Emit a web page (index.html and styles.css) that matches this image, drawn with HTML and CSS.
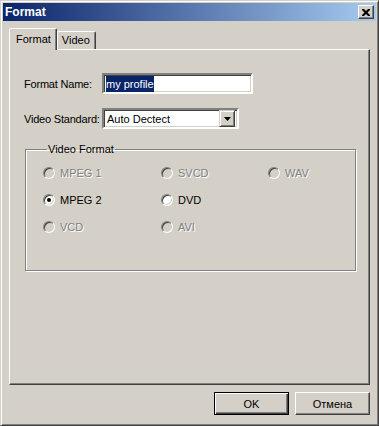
FILE: index.html
```html
<!DOCTYPE html>
<html lang="en">

<head>
    <meta charset="UTF-8">
    <title>Format</title>
    <link rel="stylesheet" href="styles.css">
</head>

<body>
    <div class="window">
        <div class="titlebar">
            <span class="title">Format</span>
            <button class="close-btn">
                <svg width="8" height="7" viewBox="0 0 8 7">
                    <path d="M0 0h2l2 2 2-2h2v1l-2.5 2.5L8 6v1H6L4 5 2 7H0V6l2.5-2.5L0 1z" fill="#000"/>
                </svg>
            </button>
        </div>

        <div class="content">
            <div class="tabs">
                <div class="tab active">Format</div>
                <div class="tab">Video</div>
            </div>

            <div class="panel">
                <div class="field-row">
                    <label class="field-label">Format Name:</label>
                    <div class="textbox name-box"><span class="selected-text">my profile</span></div>
                </div>

                <div class="field-row standard-row">
                    <label class="field-label">Video Standard:</label>
                    <div class="textbox select-box">
                        <span class="select-value">Auto Dectect</span>
                        <span class="drop-btn">
                            <svg width="7" height="4" viewBox="0 0 7 4"><path d="M0 0h7L3.5 4z" fill="#000"/></svg>
                        </span>
                    </div>
                </div>

                <fieldset class="group">
                    <legend>Video Format</legend>
                    <div class="radio-grid">
                        <div class="radio disabled"><span class="dot"></span>MPEG 1</div>
                        <div class="radio disabled"><span class="dot"></span>SVCD</div>
                        <div class="radio disabled"><span class="dot"></span>WAV</div>

                        <div class="radio checked"><span class="dot"></span>MPEG 2</div>
                        <div class="radio"><span class="dot"></span>DVD</div>
                        <div></div>

                        <div class="radio disabled"><span class="dot"></span>VCD</div>
                        <div class="radio disabled"><span class="dot"></span>AVI</div>
                        <div></div>
                    </div>
                </fieldset>
            </div>

            <div class="footer">
                <button class="btn default">OK</button>
                <button class="btn">Отмена</button>
            </div>
        </div>
    </div>
</body>

</html>
```

FILE: styles.css
```css
body {
    margin: 0;
    font-family: 'Liberation Sans', Arial, sans-serif;
    font-size: 11px;
    color: #000;
    background: #d4d0c8;
}

.window {
    width: 379px;
    height: 426px;
    box-sizing: border-box;
    background: #d4d0c8;
    border: 1px solid;
    border-color: #d4d0c8 #404040 #404040 #d4d0c8;
    box-shadow: inset 1px 1px #fff, inset -1px -1px #808080;
    padding: 2px;
    display: flex;
    flex-direction: column;
}

.titlebar {
    height: 18px;
    display: flex;
    align-items: center;
    justify-content: space-between;
    padding: 0 2px 0 2px;
    background: linear-gradient(to right, #0a246a, #a6caf0);
}

.title {
    color: #fff;
    font-weight: bold;
    font-size: 12px;
}

.close-btn {
    width: 16px;
    height: 14px;
    padding: 0;
    border: 1px solid;
    border-color: #fff #404040 #404040 #fff;
    box-shadow: inset -1px -1px #808080;
    background: #d4d0c8;
    display: flex;
    align-items: center;
    justify-content: center;
}

.content {
    flex: 1;
    display: flex;
    flex-direction: column;
    padding: 7px 6px 8px 6px;
}

/* Tabs */
.tabs {
    display: flex;
    align-items: flex-end;
    height: 21px;
    position: relative;
    z-index: 1;
}

.tab {
    height: 17px;
    padding: 0 5px 0 4px;
    line-height: 17px;
    border: 1px solid;
    border-bottom: none;
    border-color: #fff #404040 transparent #fff;
    box-shadow: inset -1px 0 #808080;
    border-radius: 2px 2px 0 0;
}

.tab.active {
    height: 21px;
    line-height: 20px;
    padding: 0 5px 0 6px;
    background: #d4d0c8;
    margin-bottom: -1px;
}

.panel {
    flex: 1;
    border: 1px solid;
    border-color: #fff #404040 #404040 #fff;
    box-shadow: inset -1px -1px #808080;
    padding: 23px 15px 0 14px;
}

/* Fields */
.field-row {
    display: flex;
    align-items: center;
    height: 21px;
}

.standard-row {
    margin-top: 14px;
}

.field-label {
    width: 78px;
    flex-shrink: 0;
    white-space: nowrap;
    letter-spacing: -0.2px;
}

.textbox {
    height: 21px;
    box-sizing: border-box;
    background: #fff;
    border: 2px solid;
    border-color: #808080 #fff #fff #808080;
    box-shadow: inset 1px 1px #404040, inset -1px -1px #d4d0c8;
    display: flex;
    align-items: center;
    padding-left: 2px;
}

.name-box {
    width: 151px;
}

.selected-text {
    background: #0a246a;
    color: #fff;
    padding: 1px 0;
    line-height: 14px;
}

.select-box {
    width: 137px;
    padding: 2px;
}

.select-value {
    flex: 1;
    padding-left: 1px;
}

.drop-btn {
    width: 16px;
    height: 17px;
    box-sizing: border-box;
    background: #d4d0c8;
    border: 1px solid;
    border-color: #d4d0c8 #404040 #404040 #d4d0c8;
    box-shadow: inset 1px 1px #fff, inset -1px -1px #808080;
    display: flex;
    align-items: center;
    justify-content: center;
}

/* Group box */
.group {
    margin: 14px 0 0 1px;
    width: 331px;
    height: 128px;
    box-sizing: border-box;
    border: 1px solid #808080;
    box-shadow: inset 1px 1px #fff, 1px 1px #fff;
    padding: 11px 0 0 17px;
}

.group legend {
    padding: 0 1px;
    margin-left: 4px;
}

.radio-grid {
    display: grid;
    grid-template-columns: 118px 107px 80px;
    grid-auto-rows: 13px;
    row-gap: 14px;
}

.radio {
    display: flex;
    align-items: center;
    gap: 5px;
    white-space: nowrap;
    font-weight: normal;
}

.dot {
    width: 12px;
    height: 12px;
    box-sizing: border-box;
    border-radius: 50%;
    background: #fff;
    border: 1px solid;
    border-color: #808080 #fff #fff #808080;
    box-shadow: inset 1px 1px #404040, inset -1px -1px #d4d0c8;
    position: relative;
}

.radio.disabled {
    color: #808080;
    text-shadow: 1px 1px #fff;
}

.radio.disabled .dot {
    background: #d4d0c8;
}

.radio.checked .dot::after {
    content: "";
    position: absolute;
    left: 3px;
    top: 3px;
    width: 4px;
    height: 4px;
    border-radius: 50%;
    background: #000;
}

/* Buttons */
.footer {
    display: flex;
    justify-content: flex-end;
    gap: 6px;
    margin-top: 7px;
}

.btn {
    width: 75px;
    height: 23px;
    font-family: 'Liberation Sans', Arial, sans-serif;
    font-size: 11px;
    font-weight: normal;
    color: #000;
    background: #d4d0c8;
    border: 1px solid;
    border-color: #fff #404040 #404040 #fff;
    box-shadow: inset -1px -1px #808080;
    padding: 0;
}

.btn.default {
    border: 1px solid #000;
    box-shadow: inset 1px 1px #fff, inset -1px -1px #404040, inset -2px -2px #808080;
}
```
